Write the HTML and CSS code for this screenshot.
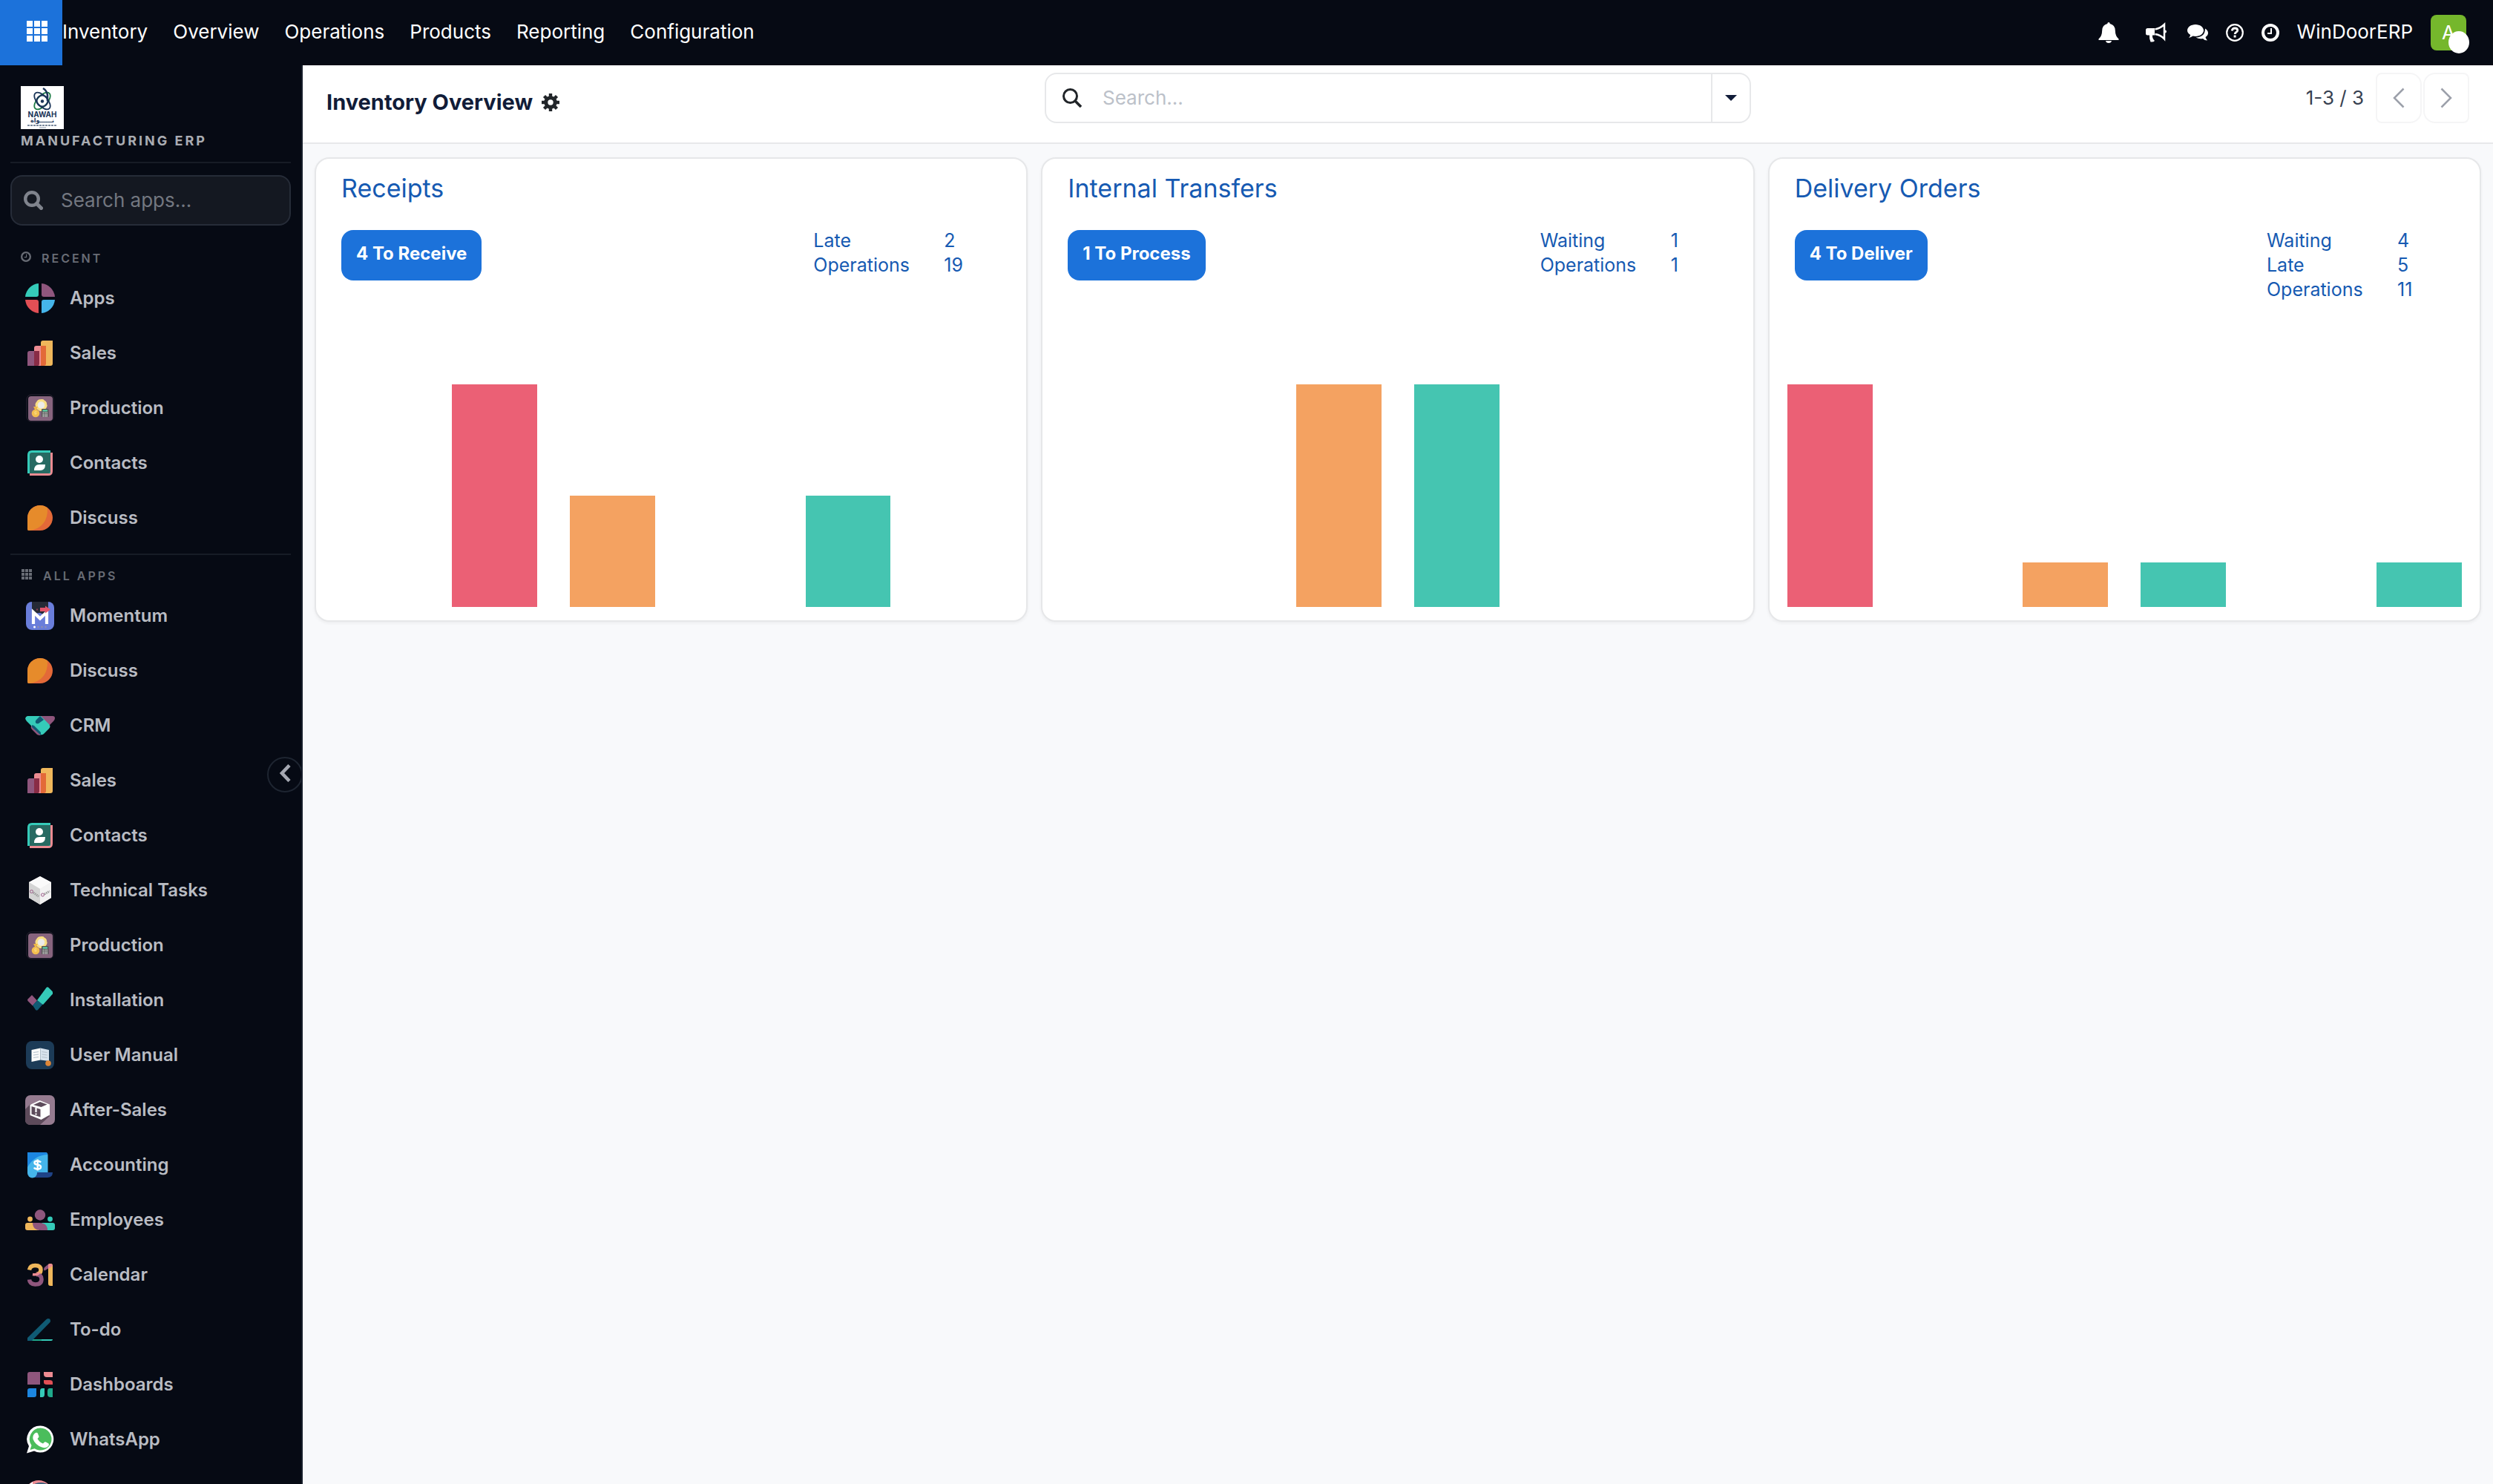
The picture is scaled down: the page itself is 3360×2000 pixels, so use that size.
FILE: index.html
```html
<!DOCTYPE html>
<html lang="en">
<head>
<meta charset="utf-8">
<title>Inventory Overview</title>
<link rel="stylesheet" href="styles.css">
</head>
<body>
<!-- icon sprites -->
<svg class="sprites" aria-hidden="true">
	<symbol id="i-grid" viewBox="0 0 28 28"><path d="M0 0h8v8H0zM10 0h8v8h-8zM20 0h8v8h-8zM0 10h8v8H0zM10 10h8v8h-8zM20 10h8v8h-8zM0 20h8v8H0zM10 20h8v8h-8zM20 20h8v8h-8z" fill="currentColor"/></symbol>
	<symbol id="i-search" viewBox="0 0 26 26"><circle cx="11" cy="11" r="8.8" fill="none" stroke="currentColor" stroke-width="4.4"/><path d="M17.5 17.5l6 6" stroke="currentColor" stroke-width="5" stroke-linecap="round"/></symbol>
	<symbol id="i-search-thin" viewBox="0 0 26 26"><circle cx="10.5" cy="10.5" r="9" fill="none" stroke="currentColor" stroke-width="3"/><path d="M17 17l8 8" stroke="currentColor" stroke-width="3.6"/></symbol>
	<symbol id="i-clock" viewBox="0 0 24 24"><circle cx="12" cy="12" r="10" fill="none" stroke="currentColor" stroke-width="4"/><path d="M13 6v7H8" fill="none" stroke="currentColor" stroke-width="2"/></symbol>
	<symbol id="i-apps" viewBox="0 0 40 40"><path d="M18 0v15q0 3-3 3H0A20 20 0 0 1 18 0z" fill="#35cbb9"/><path d="M22 0v15q0 3 3 3h15A20 20 0 0 0 22 0z" fill="#8f567d"/><path d="M18 40V25q0-3-3-3H0a20 20 0 0 0 18 18z" fill="#e14f55"/><path d="M22 40V25q0-3 3-3h15a20 20 0 0 1-18 18z" fill="#45b5ea"/></symbol>
	<symbol id="i-sales" viewBox="0 0 40 40"><path d="M3 20q0-3 3-3h13v20H3z" fill="#8f567d"/><path d="M12 13q0-3 3-3h13v24q0 3-3 3H12z" fill="#ec8b92"/><path d="M21 6q0-3 3-3h13v31q0 3-3 3H21z" fill="#efb75b"/><path d="M12 17h7v17q0 3-2 3h-5z" fill="#892c46"/><path d="M21 10h7v24q0 3-3 3h-4z" fill="#e36938"/></symbol>
	<symbol id="i-production" viewBox="0 0 40 40"><rect x="2" y="2" width="36" height="36" rx="6" fill="none" stroke="#2b2534"/><rect x="4" y="4" width="33" height="33" rx="4" fill="#87647e"/><circle cx="21.500" cy="16" r="6.400" fill="#efe8d4" stroke="#f9df83" stroke-width="3"/><circle cx="21.500" cy="16" r="7.200" fill="none" stroke="#f9df83" stroke-width="1.500" stroke-dasharray="3 2.650"/><circle cx="21.500" cy="16" r="4" fill="#ececea"/><path d="M11 18h6l-2 4h-2z" fill="#efb848"/><circle cx="14" cy="27" r="5.300" fill="#f3bf4f"/><path d="M15.500 25q-3-1-3 .7t2.500 1.200q1 1.700-2.500 1" fill="none" stroke="#fae08c"/><rect x="22" y="21" width="9.500" height="11" rx="1" fill="#555"/><path d="M23.500 22.500h6.500v2h-6.500z" fill="#5dddb1"/><path d="M23.500 26.500h6.500M23.500 29h6.500M23.500 31h6.500" stroke="#ddd" stroke-width="1.300" stroke-dasharray="1.500 1"/></symbol>
	<symbol id="i-contacts" viewBox="0 0 40 40"><path d="M6 6h31v25q0 6-6 6H6z" fill="#ec8b92"/><path d="M3 9q0-6 6-6h25v31H3z" fill="#35cbb9"/><path d="M6 9q0-3 3-3h25v25q0 3-3 3H6z" fill="#276a62"/><circle cx="19" cy="15" r="5" fill="#fff"/><path d="M12 30q0-8 7-8h8q0 8-7 8z" fill="#fff"/></symbol>
	<symbol id="i-discuss" viewBox="0 0 40 40"><path d="M3 20a17 17 0 1 1 17 17H5q-2 0-2-2z" fill="#e36938"/><path d="M3 20A17 17 0 0 1 30 6.500Q31 33 6 37H5q-2 0-2-2z" fill="#e68b2b"/></symbol>
	<symbol id="i-momentum" viewBox="0 0 40 40"><rect x="1" y="1" width="38" height="38" rx="8" fill="#697dda"/><path d="M9 1h22v20L20 16 9 17z" fill="#252a36"/><path d="M11 31V15l9 8.500 9-8.500v16" fill="none" stroke="#fff" stroke-width="4.200"/><path d="M15 11.500h2" stroke="#8e3e52" stroke-width="2"/><path d="M20 9h7V6.500l7 5-7 5V14h-7z" fill="#e0546c"/><circle cx="12.500" cy="35" r="1.500" fill="#fff"/><path d="M16.500 35h2M21.500 35h2M26.500 35h2" stroke="#938fae" stroke-width="2.500"/></symbol>
	<symbol id="i-crm" viewBox="0 0 40 40"><path d="M20 7h17q3 0 3 3 0 2-2 4l-6 6z" fill="#8f567d"/><path d="M8 20l6-1 8 12-2 2q-2 0-4-1L9 25q-2-2-1-5z" fill="#8f567d"/><path d="M3 7h18l11 11q3 3 0 6l-7 7q-2 2-5 1L2 14q-4-5 1-7z" fill="#35cbb9"/><path d="M20 7l5 5-7 5q-3 1-4-1-1-2 1-4zM9 19l3 1 9 9v4L9 22z" fill="#105b74"/></symbol>
	<symbol id="i-technical" viewBox="0 0 40 40"><path d="M20 1l15 8v21l-15 9-15-9V9z" fill="#e6e6e6"/><path d="M20 1l15 8-15 9L5 9z" fill="#fafafa"/><path d="M20 18l15-9v21l-15 9z" fill="#f2f2f2"/><path d="M5 9l15 9v21L5 30z" fill="#d4d4d4"/><circle cx="8.500" cy="21.500" r="2" fill="none" stroke="#9b5a87"/><circle cx="23.500" cy="26" r="2" fill="none" stroke="#9b5a87"/><path d="M11 23l7 5M26 25l7-4" stroke="#999" stroke-width="3" stroke-dasharray="1.500 1"/></symbol>
	<symbol id="i-installation" viewBox="0 0 40 40"><path d="M9 13l7 7.500-6 7L3.500 21q-1-1.500 0-2.500z" fill="#8f567d"/><path d="M16 20.500l8 4.500-7 8q-1.500 1.500-3 0l-4-6z" fill="#105b74"/><path d="M28.500 3q1.500-1.500 3 0L37 8.500v3L24 26l-8-6z" fill="#35cbb9"/></symbol>
	<symbol id="i-manual" viewBox="0 0 40 40"><rect x="1" y="1" width="38" height="38" rx="8" fill="#1c3b57"/><path d="M8.500 13l12-2.500v16L8.500 29z" fill="#fafafa"/><path d="M20.500 10.500l11.500 2.500v15l-11.500-1.500z" fill="#d8e3ee"/><path d="M11 16.500l7-1M11 20l7-1M11 23.500l7-1M22.500 15.500l7 1M22.500 19l7 1M22.500 22.500l7 1" stroke="#b3bfcb"/><circle cx="31" cy="31" r="3.800" fill="#de8637"/></symbol>
	<symbol id="i-aftersales" viewBox="0 0 40 40"><rect width="40" height="40" rx="7" fill="#957b90"/><path d="M0 19L7 12l26 16-13 12H7q-7 0-7-7z" fill="#5d4b5b"/><path d="M6.500 13l13-6L33 12.500v14L21.500 33 6.500 27z" fill="#fff"/><path d="M11 13l9-4 9.500 3.500-8 3.500zM8.500 15l12 4v10.500l-12-4z" fill="#5d4b5b"/><path d="M14.500 17v6M14.500 24.500v2" stroke="#fff" stroke-width="2.200"/></symbol>
	<symbol id="i-accounting" viewBox="0 0 40 40"><path d="M3 3h24q3.500 0 3.500 4v24H3z" fill="#45b5ea"/><path d="M3 3h24q3 0 3 3Q12 7 3 23z" fill="#1c86e0"/><path d="M14 30h23q0 7-7 7H9z" fill="#1f4387"/><path d="M3 28h13v3a6.500 6.500 0 0 1-13 0z" fill="#45b5ea"/><path d="M21 16.500q-1.500-2-4.500-2-4 0-4 2.500 0 2.200 4.200 2.700 4.300.5 4.300 3 0 2.800-4.500 2.800-3.500 0-4.500-2M16.700 12.500v15" fill="none" stroke="#fff" stroke-width="2.500"/></symbol>
	<symbol id="i-employees" viewBox="0 0 40 40"><circle cx="20" cy="13.500" r="7.200" fill="#8f567d"/><circle cx="6.500" cy="19" r="3.400" fill="#efb75b"/><circle cx="33.500" cy="19" r="3.400" fill="#35cbb9"/><path d="M3 24h10l6 10H3q-3 0-3-3v-4q0-3 3-3z" fill="#efb75b"/><path d="M22 24h15q3 0 3 3v4q0 3-3 3h-9z" fill="#35cbb9"/><path d="M10 24h9q11 0 11 10h-9Q10 34 10 24z" fill="#8f567d"/></symbol>
	<symbol id="i-calendar" viewBox="0 0 40 40"><g fill="none" stroke-width="5.500"><path d="M5.500 13.500q1-6 8-6 7.500 0 7.500 6 0 5-6 6" stroke="#efb75b"/><path d="M15 19.500q7 .5 7 6.500 0 7-8.500 7Q6 32.500 5.500 26.500" stroke="#8f567d"/><path d="M10 19.500q7 1 9-2.500" stroke="#ec8b92" stroke-width="3.500"/></g><path d="M26 10l6-5v6l-6 3.500q-2-2 0-4.500z" fill="#8f567d"/><path d="M31 8q0-3 3-3 3 0 3 3v27h-3q-3 0-3-3z" fill="#efb75b"/><path d="M31 8q0-3 3-3 3 0 3 3l-6 4z" fill="#ec8b92"/></symbol>
	<symbol id="i-todo" viewBox="0 0 40 40"><path d="M5 33h32q0 2-2 2H5z" fill="#35cbb9"/><path d="M8 33h14v2H8z" fill="#1fa98b"/><path d="M28 6.500q2-2.500 5-1 2 3 0 5L9 35H3v-4z" fill="#105b74"/></symbol>
	<symbol id="i-dashboards" viewBox="0 0 40 40"><path d="M6 3h14v17H3V6q0-3 3-3z" fill="#8f567d"/><path d="M25 3h12v7h-8q-4 0-4-4z" fill="#ec8b92"/><path d="M25 14h8q4 0 4 3v3h-8q-4 0-4-3z" fill="#e14f55"/><path d="M6 25h9v9q0 3-3 3H3v-9q0-3 3-3z" fill="#1c86e0"/><path d="M26 25v8q0 4-3 4h-3v-8q0-4 3-4z" fill="#35cbb9"/><path d="M37 25v12h-3q-4 0-4-4v-4q0-4 3-4z" fill="#1fa98b"/></symbol>
	<symbol id="i-whatsapp" viewBox="0 0 40 40"><path d="M20.500 1.500a18 18 0 1 1-8.500 34l-10 3 3-9.500A18 18 0 0 1 20.500 1.500z" fill="#fff"/><path d="M20.500 4.500a15 15 0 1 1-8 27.700L6.500 34l2-6A15 15 0 0 1 20.500 4.500z" fill="#4bbd5c"/><path d="M14 11q2-1 3 1l1.500 4q0 1-2 3 3 5 7.500 6.500l2-2q1-.5 2 0l3.500 2q1 1 0 3-3 4-9 2-9-3-12-11-1-6 3.500-8.500z" fill="#fff"/></symbol>
	<symbol id="i-surveys" viewBox="0 0 40 40"><circle cx="18" cy="20" r="19" fill="#ec8b92"/><circle cx="21" cy="22" r="18" fill="#3c5f7c"/><path d="M6 6l4-3v4z" fill="#fff"/></symbol>
</svg>

<header class="topbar">
	<button class="apps_toggle" aria-label="Apps menu"><svg><use href="#i-grid"/></svg></button>
	<nav class="menu">
		<a href="#">Inventory</a>
		<a href="#">Overview</a>
		<a href="#">Operations</a>
		<a href="#">Products</a>
		<a href="#">Reporting</a>
		<a href="#">Configuration</a>
	</nav>
	<div class="systray">
		<button class="bt_bell" aria-label="Notifications"><svg viewBox="0 0 28 28"><path d="M14 0q1.500 0 1.800 2 6.700 1.500 7 9 .2 8 4.700 11.500V24H.5v-1.500Q5 19 5.200 11q.3-7.500 7-9Q12.500 0 14 0zM10 25h8q-.5 3-4 3t-4-3z" fill="currentColor"/></svg></button>
		<button class="bt_horn" aria-label="Announcements"><svg viewBox="0 0 28 28"><path d="M2.500 8H12v9.500H9q-.5 4 3 7.500-1.500 2-5.500 1.500Q4.500 22 5 17.500H2.500Q0 17.500 0 15v-4.500Q0 8 2.500 8z" fill="currentColor"/><path d="M12.500 9.500Q20 8 25 3v19.500Q20 17 12.500 16" fill="none" stroke="currentColor" stroke-width="2.500"/><path d="M26 10.500q2 0 2 2t-2 2z" fill="currentColor"/></svg></button>
		<button aria-label="Messages"><svg viewBox="0 0 28 28"><path d="M11 3c6 0 11 3.600 11 8s-5 8-11 8q-2 0-3.500-.4Q5 20.500 2 21q2-2 2.200-4Q0 14.500 0 11c0-4.400 5-8 11-8z" fill="currentColor"/><path d="M24 8.500q4 2.500 4 6 0 3-3.500 5.500.5 2.500 2.500 4.500-4 0-6-2.500-5.500 1-9.500-1.500Q24 20 24 8.500z" fill="currentColor"/></svg></button>
		<button class="bt_small" aria-label="Help"><svg viewBox="0 0 24 24"><circle cx="12" cy="12" r="10.800" fill="none" stroke="currentColor" stroke-width="2.200"/><path d="M8.200 9.500q.5-3.500 4-3.500 3.500 0 3.500 3 0 1.500-2 2.500-1.500 1-1.500 2.500" fill="none" stroke="currentColor" stroke-width="2.800"/><path d="M10.600 15.500h3v3h-3z" fill="currentColor"/></svg></button>
		<button class="bt_small" aria-label="Activities"><svg><use href="#i-clock"/></svg></button>
		<a class="company" href="#">WinDoorERP</a>
		<button class="avatar" aria-label="User menu">A<span class="status"></span></button>
	</div>
</header>

<div class="page">
	<aside class="sidebar">
		<div class="brand">
			<svg class="logo" viewBox="0 0 58 58">
				<rect width="58" height="58" fill="#fff"/>
				<g fill="none" stroke-width="1.800"><ellipse cx="29" cy="20" rx="7" ry="14" transform="rotate(42 29 20)" stroke="#1d7c45"/><ellipse cx="29" cy="20" rx="7" ry="14" transform="rotate(-42 29 20)" stroke="#1b3558"/><circle cx="29" cy="20" r="7.500" stroke="#1b3558" stroke-width="2.200"/><path d="M30 3q5 3 6 9v8" stroke="#1b3558" stroke-width="2.600"/></g>
				<circle cx="29" cy="20.500" r="2.200" fill="#1b3558"/>
				<text class="logo_en" x="29" y="42" text-anchor="middle">NAWAH</text>
				<text class="logo_ar" x="29" y="49" text-anchor="middle">نــــــواة</text>
				<path d="M9 53h40" stroke="#53657f" stroke-width="1.500" stroke-dasharray="3 1"/><path d="M25 56h9" stroke="#8a96a8"/>
			</svg>
			<p>MANUFACTURING ERP</p>
		</div>
		<label class="app_search"><svg><use href="#i-search"/></svg><input type="text" placeholder="Search apps..." aria-label="Search apps"></label>

		<!-- recent -->
		<h2 class="group"><svg class="g_clock"><use href="#i-clock"/></svg>RECENT</h2>
		<ul class="apps">
			<li><a href="#"><svg><use href="#i-apps"/></svg>Apps</a></li>
			<li><a href="#"><svg><use href="#i-sales"/></svg>Sales</a></li>
			<li><a href="#"><svg><use href="#i-production"/></svg>Production</a></li>
			<li><a href="#"><svg><use href="#i-contacts"/></svg>Contacts</a></li>
			<li><a href="#"><svg><use href="#i-discuss"/></svg>Discuss</a></li>
		</ul>

		<!-- all apps -->
		<h2 class="group group_all"><svg class="g_grid" preserveAspectRatio="none"><use href="#i-grid"/></svg>ALL APPS</h2>
		<ul class="apps">
			<li><a href="#"><svg><use href="#i-momentum"/></svg>Momentum</a></li>
			<li><a href="#"><svg><use href="#i-discuss"/></svg>Discuss</a></li>
			<li><a href="#"><svg><use href="#i-crm"/></svg>CRM</a></li>
			<li><a href="#"><svg><use href="#i-sales"/></svg>Sales</a></li>
			<li><a href="#"><svg><use href="#i-contacts"/></svg>Contacts</a></li>
			<li><a href="#"><svg><use href="#i-technical"/></svg>Technical Tasks</a></li>
			<li><a href="#"><svg><use href="#i-production"/></svg>Production</a></li>
			<li><a href="#"><svg><use href="#i-installation"/></svg>Installation</a></li>
			<li><a href="#"><svg><use href="#i-manual"/></svg>User Manual</a></li>
			<li><a href="#"><svg><use href="#i-aftersales"/></svg>After-Sales</a></li>
			<li><a href="#"><svg><use href="#i-accounting"/></svg>Accounting</a></li>
			<li><a href="#"><svg><use href="#i-employees"/></svg>Employees</a></li>
			<li><a href="#"><svg><use href="#i-calendar"/></svg>Calendar</a></li>
			<li><a href="#"><svg><use href="#i-todo"/></svg>To-do</a></li>
			<li><a href="#"><svg><use href="#i-dashboards"/></svg>Dashboards</a></li>
			<li><a href="#"><svg><use href="#i-whatsapp"/></svg>WhatsApp</a></li>
			<li><a href="#" aria-label="More"><svg><use href="#i-surveys"/></svg></a></li>
		</ul>
		<button class="collapse" aria-label="Collapse sidebar"><svg viewBox="0 0 16 24"><path d="M14 1.500L4 12l10 10.500" fill="none" stroke="currentColor" stroke-width="4.600"/></svg></button>
	</aside>

	<main class="content">
		<div class="control">
			<div class="crumb">
				<h1>Inventory Overview</h1>
				<button class="bt_gear" aria-label="Actions"><svg viewBox="0 0 24 24"><circle cx="12" cy="12" r="6.200" fill="none" stroke="currentColor" stroke-width="5"/><path d="M12 0v5M12 19v5M0 12h5M19 12h5M3.500 3.500L7 7M17 17l3.500 3.500M3.500 20.500L7 17M17 7l3.500-3.500" stroke="currentColor" stroke-width="4.400"/></svg></button>
			</div>
			<div class="search">
				<svg><use href="#i-search-thin"/></svg>
				<input type="text" placeholder="Search..." aria-label="Search">
				<button aria-label="Search options"><svg viewBox="0 0 16 8"><path d="M0 0h16L8 8z" fill="currentColor"/></svg></button>
			</div>
			<div class="pager">
				<span>1-3 / 3</span>
				<button class="prev" aria-label="Previous"><svg viewBox="0 0 16 28"><path d="M14.500 1.500L2 14l12.500 12.500" fill="none" stroke="currentColor" stroke-width="2.500"/></svg></button>
				<button class="next" aria-label="Next"><svg viewBox="0 0 16 28"><path d="M1.500 1.500L14 14 1.500 26.500" fill="none" stroke="currentColor" stroke-width="2.500"/></svg></button>
			</div>
		</div>

		<div class="cards">
			<section class="card">
				<h3><a href="#">Receipts</a></h3>
				<div class="card_cont">
					<button class="bt_main">4 To Receive</button>
					<div class="stats">
						<a href="#"><span>Late</span><span>2</span></a>
						<a href="#"><span>Operations</span><span>19</span></a>
					</div>
				</div>
				<div class="chart">
					<i></i>
					<i class="late" style="height:100%"></i>
					<i class="today" style="height:50%"></i>
					<i></i>
					<i class="future" style="height:50%"></i>
					<i></i>
				</div>
			</section>
			<section class="card">
				<h3><a href="#">Internal Transfers</a></h3>
				<div class="card_cont">
					<button class="bt_main">1 To Process</button>
					<div class="stats">
						<a href="#"><span>Waiting</span><span>1</span></a>
						<a href="#"><span>Operations</span><span>1</span></a>
					</div>
				</div>
				<div class="chart">
					<i></i>
					<i></i>
					<i class="today" style="height:100%"></i>
					<i class="future" style="height:100%"></i>
					<i></i>
					<i></i>
				</div>
			</section>
			<section class="card">
				<h3><a href="#">Delivery Orders</a></h3>
				<div class="card_cont">
					<button class="bt_main">4 To Deliver</button>
					<div class="stats">
						<a href="#"><span>Waiting</span><span>4</span></a>
						<a href="#"><span>Late</span><span>5</span></a>
						<a href="#"><span>Operations</span><span>11</span></a>
					</div>
				</div>
				<div class="chart">
					<i class="late" style="height:100%"></i>
					<i></i>
					<i class="today" style="height:20%"></i>
					<i class="future" style="height:20%"></i>
					<i></i>
					<i class="future" style="height:20%"></i>
				</div>
			</section>
		</div>
	</main>
</div>
</body>
</html>
```

FILE: styles.css
```css
*{box-sizing:border-box;}
html,body{height:100%;}
body{display:flex;flex-direction:column;margin:0;overflow:hidden;background-color:#F8F9FB;font:26px/32px Inter,"Noto Sans",sans-serif;color:#374151;}
h1,h2,h3,p,ul{margin:0;padding:0;}
ul{list-style:none;}
a{color:inherit;text-decoration:none;}
button,input{margin:0;padding:0;border:0 none;background:none;font:inherit;color:inherit;}
svg{display:block;flex:none;}
.sprites{position:absolute;width:0;height:0;}

/* S topbar */
.topbar{display:flex;flex:none;align-items:center;height:88px;padding-right:36px;background-color:#060A14;color:#FFFFFF;}
.apps_toggle{display:flex;align-items:center;width:84px;height:88px;padding:0 0 4px 36px;background-color:#1C72DA;}
.apps_toggle svg{width:28px;height:28px;}
.menu{display:flex;gap:34px;padding-bottom:2px;}
.systray{display:flex;align-items:center;gap:24px;margin-left:auto;}
.systray svg{width:28px;height:28px;}
.systray .bt_bell{margin-right:12px;}
.systray .bt_horn{margin-right:4px;}
.systray .bt_small svg{width:24px;height:24px;}
.company{padding-bottom:2px;}
.avatar{position:relative;width:48px;height:48px;border-radius:8px;background-color:#75B72C;color:#FFFFFF;}
.avatar .status{position:absolute;right:-4px;bottom:-4px;width:28px;height:30px;border-radius:50%;background-color:#FFFFFF;}
/* E topbar */

.page{display:flex;flex:1;min-height:0;}

/* S sidebar */
.sidebar{position:relative;flex:none;width:408px;padding:28px 14px 0;border-right:2px solid #161D2A;overflow:hidden;background-color:#060A14;color:#B9BCC3;}
.brand{padding:0 14px 16px;border-bottom:2px solid #171C26;}
.logo{width:58px;height:58px;}
.logo_en{font:bold 10px Inter,sans-serif;fill:#1B3558;}
.logo_ar{font:bold 8px "DejaVu Sans",sans-serif;fill:#1B3558;}
.brand p{padding-top:4px;font-size:18px;font-weight:700;line-height:24px;letter-spacing:3px;color:#A9ACB2;}
.app_search{display:flex;align-items:center;gap:24px;height:68px;margin-top:16px;padding:0 16px;border:2px solid #262C38;border-radius:16px;background-color:#141821;}
.app_search svg{width:26px;height:26px;color:#80848D;}
.app_search input{flex:1;min-width:0;}
.app_search input::placeholder{color:#737780;opacity:1;}
.group{display:flex;align-items:center;gap:14px;height:59px;padding:29px 14px 0;font-size:16px;font-weight:600;line-height:30px;letter-spacing:3px;color:#686C75;}
.group svg{margin-bottom:4px;}
.g_clock{width:14px;height:14px;}
.g_grid{width:16px;height:14px;}
.group_all{height:45px;margin-top:13px;padding-top:13px;border-top:2px solid #171C26;}
.apps a{display:flex;align-items:center;gap:20px;height:70px;margin-top:4px;padding:0 20px;font-size:24px;font-weight:600;line-height:30px;}
.apps svg{width:40px;height:40px;}
.collapse{position:absolute;right:-2px;top:932px;display:flex;align-items:center;justify-content:center;width:48px;height:48px;padding-bottom:4px;border:2px solid #1E2531;border-radius:50%;background-color:#060A14;color:#A5A8B2;}
.collapse svg{width:16px;height:24px;}
/* E sidebar */

/* S control panel */
.content{flex:1;min-width:0;}
.control{display:grid;grid-template-columns:1fr 952px 1fr;align-items:start;height:106px;padding:10px 32px 0;border-bottom:2px solid #E7E8EA;background-color:#FFFFFF;}
.crumb{display:flex;align-items:center;gap:12px;height:80px;}
.crumb h1{font-size:29px;font-weight:700;line-height:36px;color:#111C38;}
.bt_gear{color:#212529;}
.bt_gear svg{width:24px;height:24px;}
.search{display:flex;align-items:center;height:68px;border:2px solid #E7E8EA;border-radius:16px;}
.search > svg{width:26px;height:26px;margin:0 28px 0 22px;color:#212529;}
.search input{flex:1;min-width:0;}
.search input::placeholder{color:#BCC1C9;opacity:1;}
.search button{display:flex;align-items:center;justify-content:center;width:52px;height:64px;border-left:2px solid #E7E8EA;color:#111C38;}
.search button svg{width:16px;height:8px;}
.pager{display:flex;align-items:center;justify-content:flex-end;gap:2px;}
.pager span{margin-right:14px;}
.pager button{display:flex;align-items:center;justify-content:center;width:62px;height:68px;border:2px solid #F5F5F6;color:#9CA0AA;}
.pager svg{width:16px;height:28px;}
.pager .prev{border-radius:8px 16px 16px 8px;}
.pager .next{border-radius:16px 8px 8px 16px;}
/* E control panel */

/* S cards */
.cards{display:grid;grid-template-columns:repeat(3,1fr);gap:18px;padding:18px 16px;}
.card{border:2px solid #E6E7E9;border-radius:20px;background-color:#FFFFFF;box-shadow:0 2px 4px rgba(0,0,0,.05);color:#165AB2;}
.card h3{padding:18px 34px 0;font-size:34px;font-weight:400;line-height:44px;}
.card_cont{display:flex;justify-content:space-between;align-items:flex-start;height:208px;padding:32px 34px 0;}
.bt_main{height:68px;margin-top:2px;padding:0 20px 4px;border-radius:16px;background-color:#1C72DA;font-size:24px;font-weight:700;color:#FFFFFF;}
.stats{width:253px;font-size:25px;}
.stats a{display:grid;grid-template-columns:176px 1fr;line-height:33px;}
.chart{display:flex;align-items:flex-end;gap:44px;height:300px;margin:34px 24px 18px;}
.chart i{flex:1;}
.chart .late{background-color:#EB6075;}
.chart .today{background-color:#F4A261;}
.chart .future{background-color:#45C5B1;}
/* E cards */
```
